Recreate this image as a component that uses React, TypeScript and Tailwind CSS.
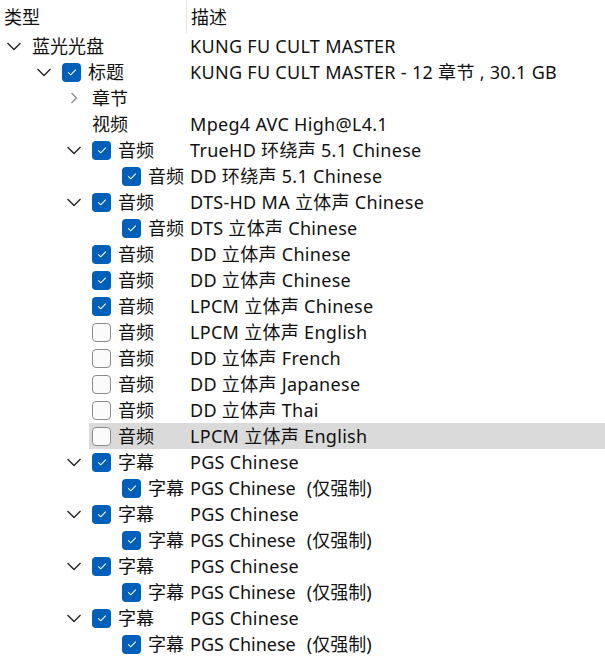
import React from 'react';

type Row = {
  level: number;
  type: string;
  desc: React.ReactNode;
  arrow?: 'down' | 'right';
  check?: boolean;
  selected?: boolean;
};

const forced = (
  <span className="tracking-normal">
    PGS Chinese<span className="ml-[11px]">(仅强制)</span>
  </span>
);

const rows: Row[] = [
  { level: 0, type: '蓝光光盘', desc: 'KUNG FU CULT MASTER', arrow: 'down' },
  { level: 1, type: '标题', desc: 'KUNG FU CULT MASTER - 12 章节 , 30.1 GB', arrow: 'down', check: true },
  { level: 2, type: '章节', desc: '', arrow: 'right' },
  { level: 2, type: '视频', desc: 'Mpeg4 AVC High@L4.1' },
  { level: 2, type: '音频', desc: 'TrueHD 环绕声 5.1 Chinese', arrow: 'down', check: true },
  { level: 3, type: '音频', desc: 'DD 环绕声 5.1 Chinese', check: true },
  { level: 2, type: '音频', desc: 'DTS-HD MA 立体声 Chinese', arrow: 'down', check: true },
  { level: 3, type: '音频', desc: 'DTS 立体声 Chinese', check: true },
  { level: 2, type: '音频', desc: 'DD 立体声 Chinese', check: true },
  { level: 2, type: '音频', desc: 'DD 立体声 Chinese', check: true },
  { level: 2, type: '音频', desc: 'LPCM 立体声 Chinese', check: true },
  { level: 2, type: '音频', desc: 'LPCM 立体声 English', check: false },
  { level: 2, type: '音频', desc: 'DD 立体声 French', check: false },
  { level: 2, type: '音频', desc: 'DD 立体声 Japanese', check: false },
  { level: 2, type: '音频', desc: 'DD 立体声 Thai', check: false },
  { level: 2, type: '音频', desc: 'LPCM 立体声 English', check: false, selected: true },
  { level: 2, type: '字幕', desc: 'PGS Chinese', arrow: 'down', check: true },
  { level: 3, type: '字幕', desc: forced, check: true },
  { level: 2, type: '字幕', desc: 'PGS Chinese', arrow: 'down', check: true },
  { level: 3, type: '字幕', desc: forced, check: true },
  { level: 2, type: '字幕', desc: 'PGS Chinese', arrow: 'down', check: true },
  { level: 3, type: '字幕', desc: forced, check: true },
  { level: 2, type: '字幕', desc: 'PGS Chinese', arrow: 'down', check: true },
  { level: 3, type: '字幕', desc: forced, check: true },
];

const indents = ['w-0', 'w-[30px]', 'w-[60px]', 'w-[90px]'];

function Chevron({ dir }: { dir: 'down' | 'right' }) {
  if (dir === 'right') {
    return (
      <svg width="20" height="20" viewBox="0 0 20 20" fill="none">
        <path d="M7.5 5 L12.5 10 L7.5 15" stroke="#8a8a8a" strokeWidth="1.3" />
      </svg>
    );
  }
  return (
    <svg width="20" height="20" viewBox="0 0 20 20" fill="none">
      <path d="M3.5 7 L10 13.5 L16.5 7" stroke="#1f1f1f" strokeWidth="1.3" />
    </svg>
  );
}

function Checkbox({ checked }: { checked: boolean }) {
  if (!checked) {
    return <div className="w-[19px] h-[19px] rounded-[4px] border border-[#8b8b8b] bg-[#fbfbfb] shrink-0" />;
  }
  return (
    <div className="w-[19px] h-[19px] rounded-[4px] bg-[#005fb8] flex items-center justify-center shrink-0">
      <svg width="12" height="12" viewBox="0 0 12 12" fill="none">
        <path d="M2.2 6.3 L4.8 8.8 L9.8 3.6" stroke="#ffffff" strokeWidth="1.1" />
      </svg>
    </div>
  );
}

export default function App() {
  return (
    <div
      className="w-[605px] h-[658px] bg-white overflow-hidden text-[18px] text-[#111] leading-none"
      style={{ fontFamily: '"Noto Sans", "Noto Sans CJK SC", sans-serif' }}
    >
      <div className="flex h-[33px] items-center">
        <div className="w-[186px] pl-[4px] h-full flex items-center">类型</div>
        <div className="w-px h-full bg-[#e5e5e5]" />
        <div className="pl-[4px] flex items-center h-full">描述</div>
      </div>
      {rows.map((r, i) => (
        <div key={i} className="relative flex h-[26px] items-center whitespace-nowrap">
          {r.selected && <div className="absolute left-[89px] right-0 top-0 bottom-0 bg-[#dadada]" />}
          <div className="relative w-[190px] flex items-center shrink-0">
            <div className={`${indents[r.level]} shrink-0`} />
            <div className="w-[4px] shrink-0" />
            <div className="w-[20px] h-[20px] shrink-0 flex items-center justify-center">
              {r.arrow && <Chevron dir={r.arrow} />}
            </div>
            <div className="w-[8px] shrink-0" />
            {r.check !== undefined && (
              <>
                <Checkbox checked={r.check} />
                <div className="w-[7px] shrink-0" />
              </>
            )}
            <span>{r.type}</span>
          </div>
          <span className="relative whitespace-pre tracking-[0.3px]">{r.desc}</span>
        </div>
      ))}
    </div>
  );
}
